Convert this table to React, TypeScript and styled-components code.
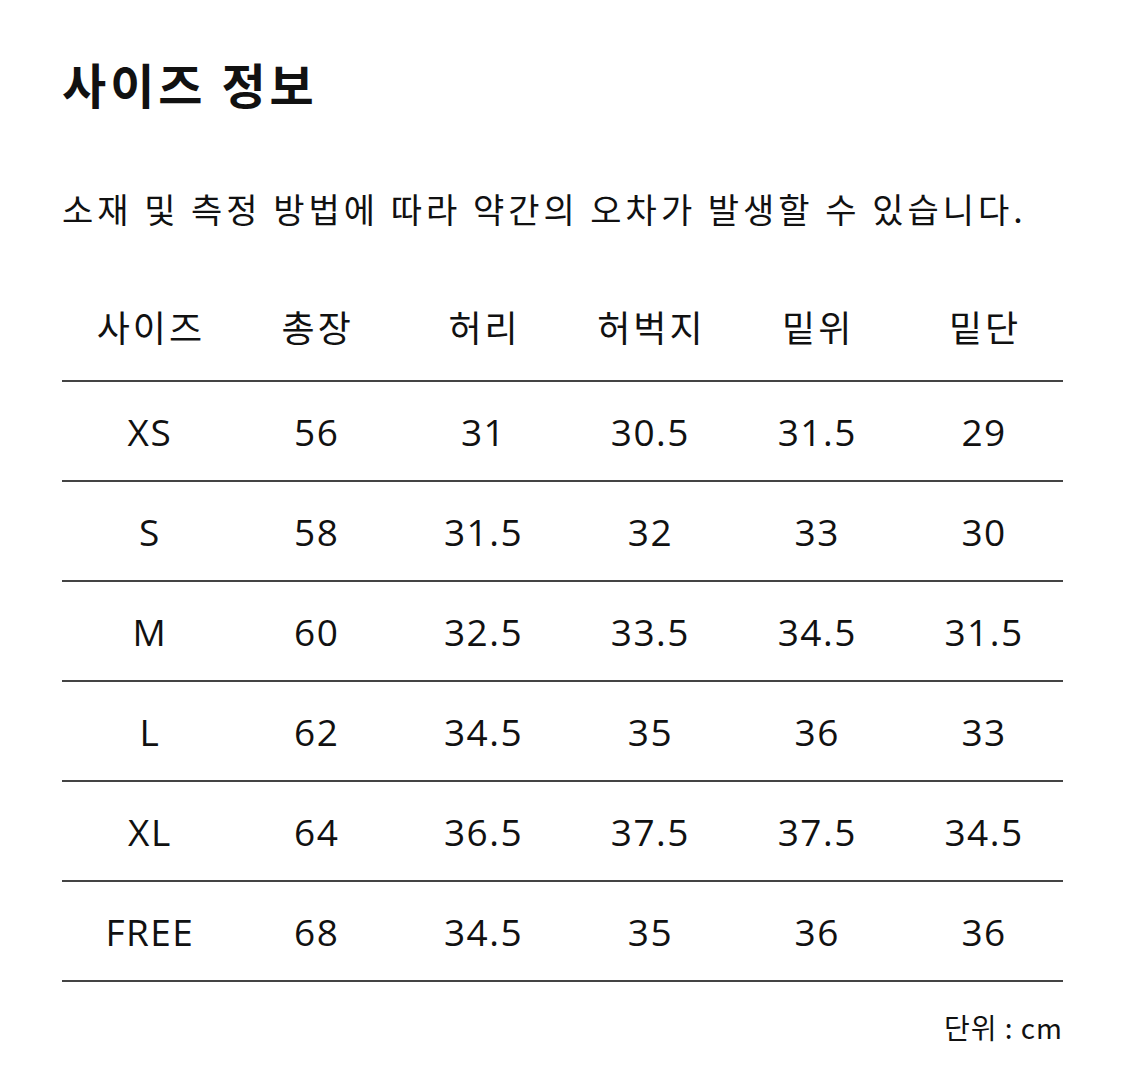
import styled, { createGlobalStyle } from "styled-components"

const GlobalStyle = createGlobalStyle`
	html, body {
		margin: 0;
		padding: 0;
		background: #fff;
	}
	body {
		font-family: "Noto Sans CJK KR", "Noto Sans", sans-serif;
		color: #111;
	}
`

const headers = ['사이즈', '총장', '허리', '허벅지', '밑위', '밑단']

const rows = [
	['XS', '56', '31', '30.5', '31.5', '29'],
	['S', '58', '31.5', '32', '33', '30'],
	['M', '60', '32.5', '33.5', '34.5', '31.5'],
	['L', '62', '34.5', '35', '36', '33'],
	['XL', '64', '36.5', '37.5', '37.5', '34.5'],
	['FREE', '68', '34.5', '35', '36', '36'],
]

const Page = styled.div`
	width: 1001px;
	padding: 46px 62px 0;
`

const Title = styled.h2`
	margin: 0;
	font-size: 48px;
	font-weight: 700;
	letter-spacing: 4px;
	line-height: 74px;
`

const Notice = styled.p`
	margin: 65px 0 0;
	font-size: 34px;
	letter-spacing: 4px;
	line-height: 48px;
	font-weight: 400;
`

const Table = styled.table`
	width: 100%;
	margin-top: 45px;
	border-collapse: collapse;
	table-layout: fixed;
`

const HeadCell = styled.th`
	height: 96px;
	padding: 0 0 6px 11px;
	font-size: 36px;
	font-weight: 400;
	letter-spacing: 3px;
	text-align: center;
	border-bottom: 2px solid #444;
`

const Cell = styled.td`
	height: 98px;
	padding: 0 0 0 9px;
	font-family: "Open Sans", "Noto Sans CJK KR", sans-serif;
	font-size: 37px;
	letter-spacing: 1.5px;
	text-align: center;
	border-bottom: 2px solid #444;
`

const Unit = styled.div`
	margin-top: 25px;
	text-align: right;
	font-size: 28px;
	letter-spacing: 1px;
	line-height: 40px;
`

export default function App() {
	return (
		<Page>
			<GlobalStyle />
			<Title>사이즈 정보</Title>
			<Notice>소재 및 측정 방법에 따라 약간의 오차가 발생할 수 있습니다.</Notice>
			<Table>
				<thead>
					<tr>
						{headers.map(h => <HeadCell key={h}>{h}</HeadCell>)}
					</tr>
				</thead>
				<tbody>
					{rows.map(r => (
						<tr key={r[0]}>
							{r.map((v, i) => <Cell key={i}>{v}</Cell>)}
						</tr>
					))}
				</tbody>
			</Table>
			<Unit>단위 : cm</Unit>
		</Page>
	)
}
